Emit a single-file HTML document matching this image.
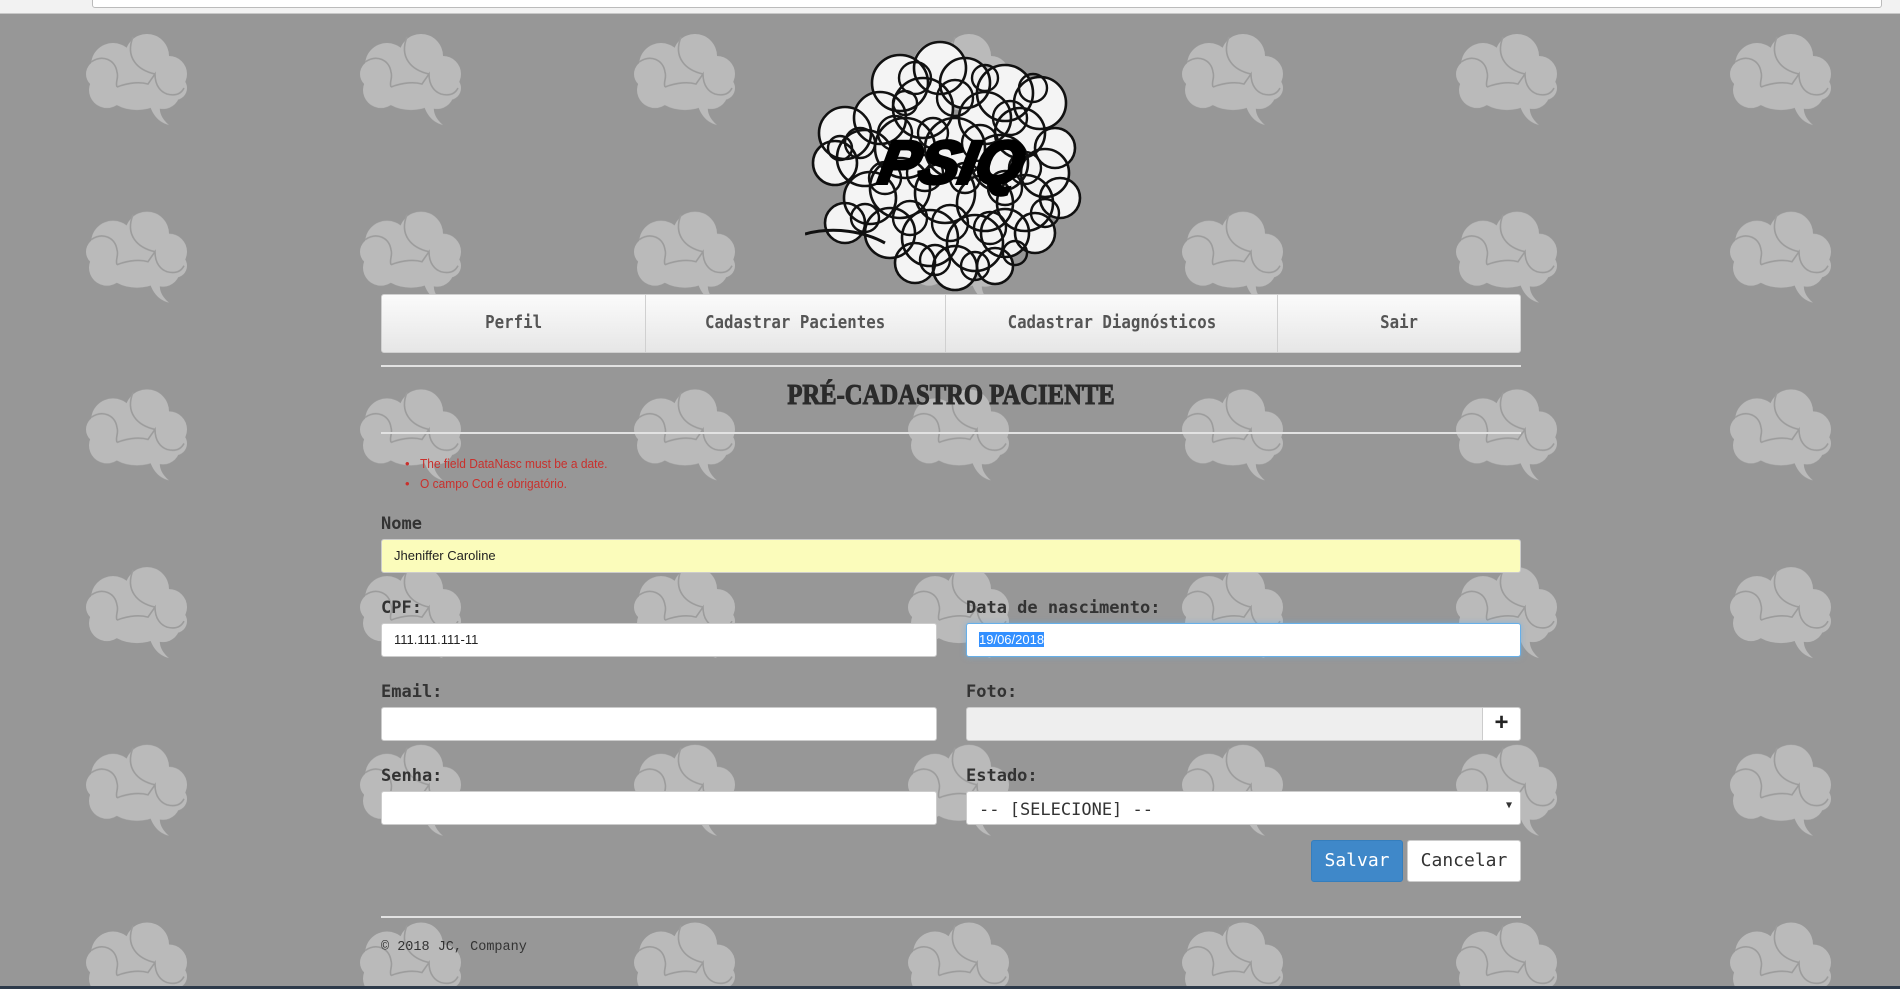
<!DOCTYPE html>
<html><head><meta charset="utf-8">
<style>
*{box-sizing:border-box;margin:0;padding:0}
html,body{width:1900px;height:989px;overflow:hidden;background:#979797;font-family:"Liberation Sans",sans-serif}
#chrome{position:absolute;left:0;top:0;width:1900px;height:14px;background:#f2f2f2;border-bottom:1px solid #c8c8c8}
#chrome .addr{position:absolute;left:92px;top:-4px;width:1790px;height:12px;background:#fff;border:1px solid #bbb;border-radius:3px}
#bg{position:absolute;left:0;top:14px}
#bottom{position:absolute;left:0;top:986px;width:1900px;height:3px;background:#2d3a4a}
.abs{position:absolute}
.nav{position:absolute;top:294px;height:59px;background:linear-gradient(#fbfbfb,#e6e6e6);border:1px solid #d0d0d0;font-family:"DejaVu Sans Mono",monospace;font-size:17.5px;color:#555;text-align:center;line-height:57px;font-weight:bold}
.nav span{display:inline-block;transform:scaleX(0.9)}
.hr{position:absolute;left:381px;width:1140px;height:2px;background:#e2e2e2}
.lbl{position:absolute;font-family:"DejaVu Sans Mono",monospace;font-weight:bold;font-size:17px;color:#333}
.inp{position:absolute;height:34px;background:#fff;border:1px solid #ccc;border-radius:3px;font-size:13px;color:#222;padding-left:12px;line-height:32px}
.err{position:absolute;left:405px;font-size:13px;color:#c9302c;font-family:"Liberation Sans",sans-serif}
.btn{position:absolute;top:840px;height:42px;border-radius:3px;font-family:"DejaVu Sans Mono",monospace;font-size:18px;text-align:center;line-height:40px}
</style></head><body>
<div id="chrome"><div class="addr"></div></div>
<svg id="bg" width="1900" height="975">
<defs>
<g id="brain" fill="#bababa">
<circle cx="28" cy="33" r="22"/>
<ellipse cx="62" cy="24" rx="22" ry="22"/>
<circle cx="84" cy="42" r="18"/>
<circle cx="90" cy="56" r="12"/>
<circle cx="15" cy="42" r="14"/>
<circle cx="22" cy="58" r="18"/>
<ellipse cx="52" cy="62" rx="28" ry="16"/>
<circle cx="78" cy="60" r="17"/>
<ellipse cx="52" cy="42" rx="32" ry="22"/>
<path d="M64 70 C66 80 72 90 84 93 C76 86 74 80 75 72 Z"/>
<g fill="none" stroke="#9c9c9c" stroke-width="1.6">
<path d="M48 5 C40 25 52 38 70 42"/>
<path d="M6 30 C18 22 30 28 32 40 C34 46 30 50 32 55"/>
<path d="M32 55 C45 50 56 50 63 52 L70 42 C70 54 76 60 82 62 C90 64 96 62 99 56"/>
</g>
</g>
<pattern id="p" patternUnits="userSpaceOnUse" x="85" y="18" width="274" height="177.7">
<use href="#brain"/>
</pattern>
</defs>
<rect width="1900" height="975" fill="url(#p)"/>
</svg>
<div id="bottom"></div>

<svg class="abs" style="left:805px;top:38px" width="285" height="256" viewBox="0 0 285 256">
<g id="cl">
<circle cx="95" cy="45" r="28"/><circle cx="135" cy="30" r="26"/><circle cx="160" cy="45" r="25"/><circle cx="118" cy="70" r="30"/>
<circle cx="75" cy="80" r="26"/><circle cx="200" cy="55" r="28"/><circle cx="235" cy="65" r="26"/><circle cx="215" cy="95" r="25"/>
<circle cx="180" cy="80" r="26"/><circle cx="40" cy="95" r="26"/><circle cx="30" cy="125" r="22"/><circle cx="60" cy="120" r="28"/>
<circle cx="100" cy="110" r="30"/><circle cx="150" cy="110" r="30"/><circle cx="195" cy="125" r="28"/><circle cx="240" cy="135" r="24"/>
<circle cx="255" cy="160" r="20"/><circle cx="220" cy="165" r="28"/><circle cx="65" cy="160" r="26"/><circle cx="40" cy="185" r="20"/>
<circle cx="95" cy="150" r="30"/><circle cx="140" cy="155" r="30"/><circle cx="180" cy="165" r="28"/><circle cx="85" cy="195" r="25"/>
<circle cx="125" cy="200" r="28"/><circle cx="170" cy="205" r="28"/><circle cx="200" cy="195" r="24"/><circle cx="150" cy="230" r="22"/>
<circle cx="110" cy="225" r="20"/><circle cx="190" cy="228" r="18"/><circle cx="230" cy="195" r="20"/><circle cx="250" cy="110" r="20"/>
</g>
<use href="#cl" fill="#f4f4f4" stroke="none"/>
<use href="#cl" fill="none" stroke="#111" stroke-width="2.6"/>
<g fill="none" stroke="#111" stroke-width="2.4">
<circle cx="110" cy="40" r="16"/><circle cx="150" cy="60" r="18"/><circle cx="90" cy="95" r="17"/><circle cx="128" cy="95" r="15"/>
<circle cx="205" cy="80" r="17"/><circle cx="228" cy="50" r="14"/><circle cx="175" cy="105" r="18"/><circle cx="220" cy="130" r="16"/>
<circle cx="55" cy="105" r="15"/><circle cx="80" cy="140" r="16"/><circle cx="120" cy="135" r="18"/><circle cx="160" cy="140" r="15"/>
<circle cx="200" cy="150" r="17"/><circle cx="240" cy="175" r="14"/><circle cx="105" cy="180" r="17"/><circle cx="145" cy="185" r="18"/>
<circle cx="185" cy="190" r="16"/><circle cx="60" cy="180" r="14"/><circle cx="130" cy="222" r="15"/><circle cx="170" cy="228" r="14"/>
<circle cx="100" cy="65" r="12"/><circle cx="180" cy="40" r="13"/><circle cx="35" cy="110" r="12"/><circle cx="210" cy="215" r="12"/>
</g>
<path d="M0 196 C30 188 60 194 80 205" fill="none" stroke="#111" stroke-width="3"/>
<text x="145" y="145" text-anchor="middle" font-family="Liberation Sans" font-weight="bold" font-style="italic" font-size="60" fill="#000" stroke="#000" stroke-width="4" transform="skewX(-10) translate(24 0)">PSIQ</text>
</svg>

<div class="nav" style="left:381px;width:265px;border-radius:3px 0 0 3px"><span>Perfil</span></div>
<div class="nav" style="left:645px;width:301px"><span>Cadastrar Pacientes</span></div>
<div class="nav" style="left:945px;width:333px"><span>Cadastrar Diagnósticos</span></div>
<div class="nav" style="left:1277px;width:244px;border-radius:0 3px 3px 0"><span>Sair</span></div>

<div class="hr" style="top:365px"></div>
<div class="abs" style="left:381px;width:1140px;top:380px;text-align:center;font-family:'Liberation Serif',serif;font-weight:bold;font-size:28px;color:#2b2b2b;-webkit-text-stroke:1px #2b2b2b"><span style="display:inline-block;transform:scaleX(0.88)">PRÉ-CADASTRO PACIENTE</span></div>
<div class="hr" style="top:432px"></div>

<div class="err" style="top:456px">•&nbsp;&nbsp; <span style="display:inline-block;transform:scaleX(0.92);transform-origin:left">The field DataNasc must be a date.</span></div>
<div class="err" style="top:476px">•&nbsp;&nbsp; <span style="display:inline-block;transform:scaleX(0.92);transform-origin:left">O campo Cod é obrigatório.</span></div>

<div class="lbl" style="left:381px;top:514px">Nome</div>
<div class="inp" style="left:381px;top:539px;width:1140px;background:#fbfcbb">Jheniffer Caroline</div>

<div class="lbl" style="left:381px;top:598px">CPF:</div>
<div class="inp" style="left:381px;top:623px;width:556px">111.111.111-11</div>
<div class="lbl" style="left:966px;top:598px">Data de nascimento:</div>
<div class="inp" style="left:966px;top:623px;width:555px;border-color:#66afe9;box-shadow:0 0 6px rgba(102,175,233,.6)"><span style="background:#3390ff;color:#fff">19/06/2018</span></div>

<div class="lbl" style="left:381px;top:682px">Email:</div>
<div class="inp" style="left:381px;top:707px;width:556px"></div>
<div class="lbl" style="left:966px;top:682px">Foto:</div>
<div class="inp" style="left:966px;top:707px;width:518px;background:#eee;border-radius:3px 0 0 3px"></div>
<div class="inp" style="left:1482px;top:707px;width:39px;padding:0;text-align:center;font-size:24px;font-weight:bold;line-height:30px;border-radius:0 3px 3px 0">+</div>

<div class="lbl" style="left:381px;top:766px">Senha:</div>
<div class="inp" style="left:381px;top:791px;width:556px"></div>
<div class="lbl" style="left:966px;top:766px">Estado:</div>
<div class="inp" style="left:966px;top:791px;width:555px;font-family:'DejaVu Sans Mono',monospace;font-size:17px;color:#333;padding-top:2px">-- [SELECIONE] --<span style="position:absolute;right:8px;top:-2px;font-size:10px">▼</span></div>

<div class="btn" style="left:1311px;width:92px;background:#3f88c9;border:1px solid #357ebd;color:#fff">Salvar</div>
<div class="btn" style="left:1407px;width:114px;background:#fff;border:1px solid #ccc;color:#333">Cancelar</div>

<div class="hr" style="top:916px"></div>
<div class="abs" style="left:381px;top:940px;font-family:'Liberation Mono',monospace;font-size:13.5px;color:#333">© 2018 JC, Company</div>
</body></html>
